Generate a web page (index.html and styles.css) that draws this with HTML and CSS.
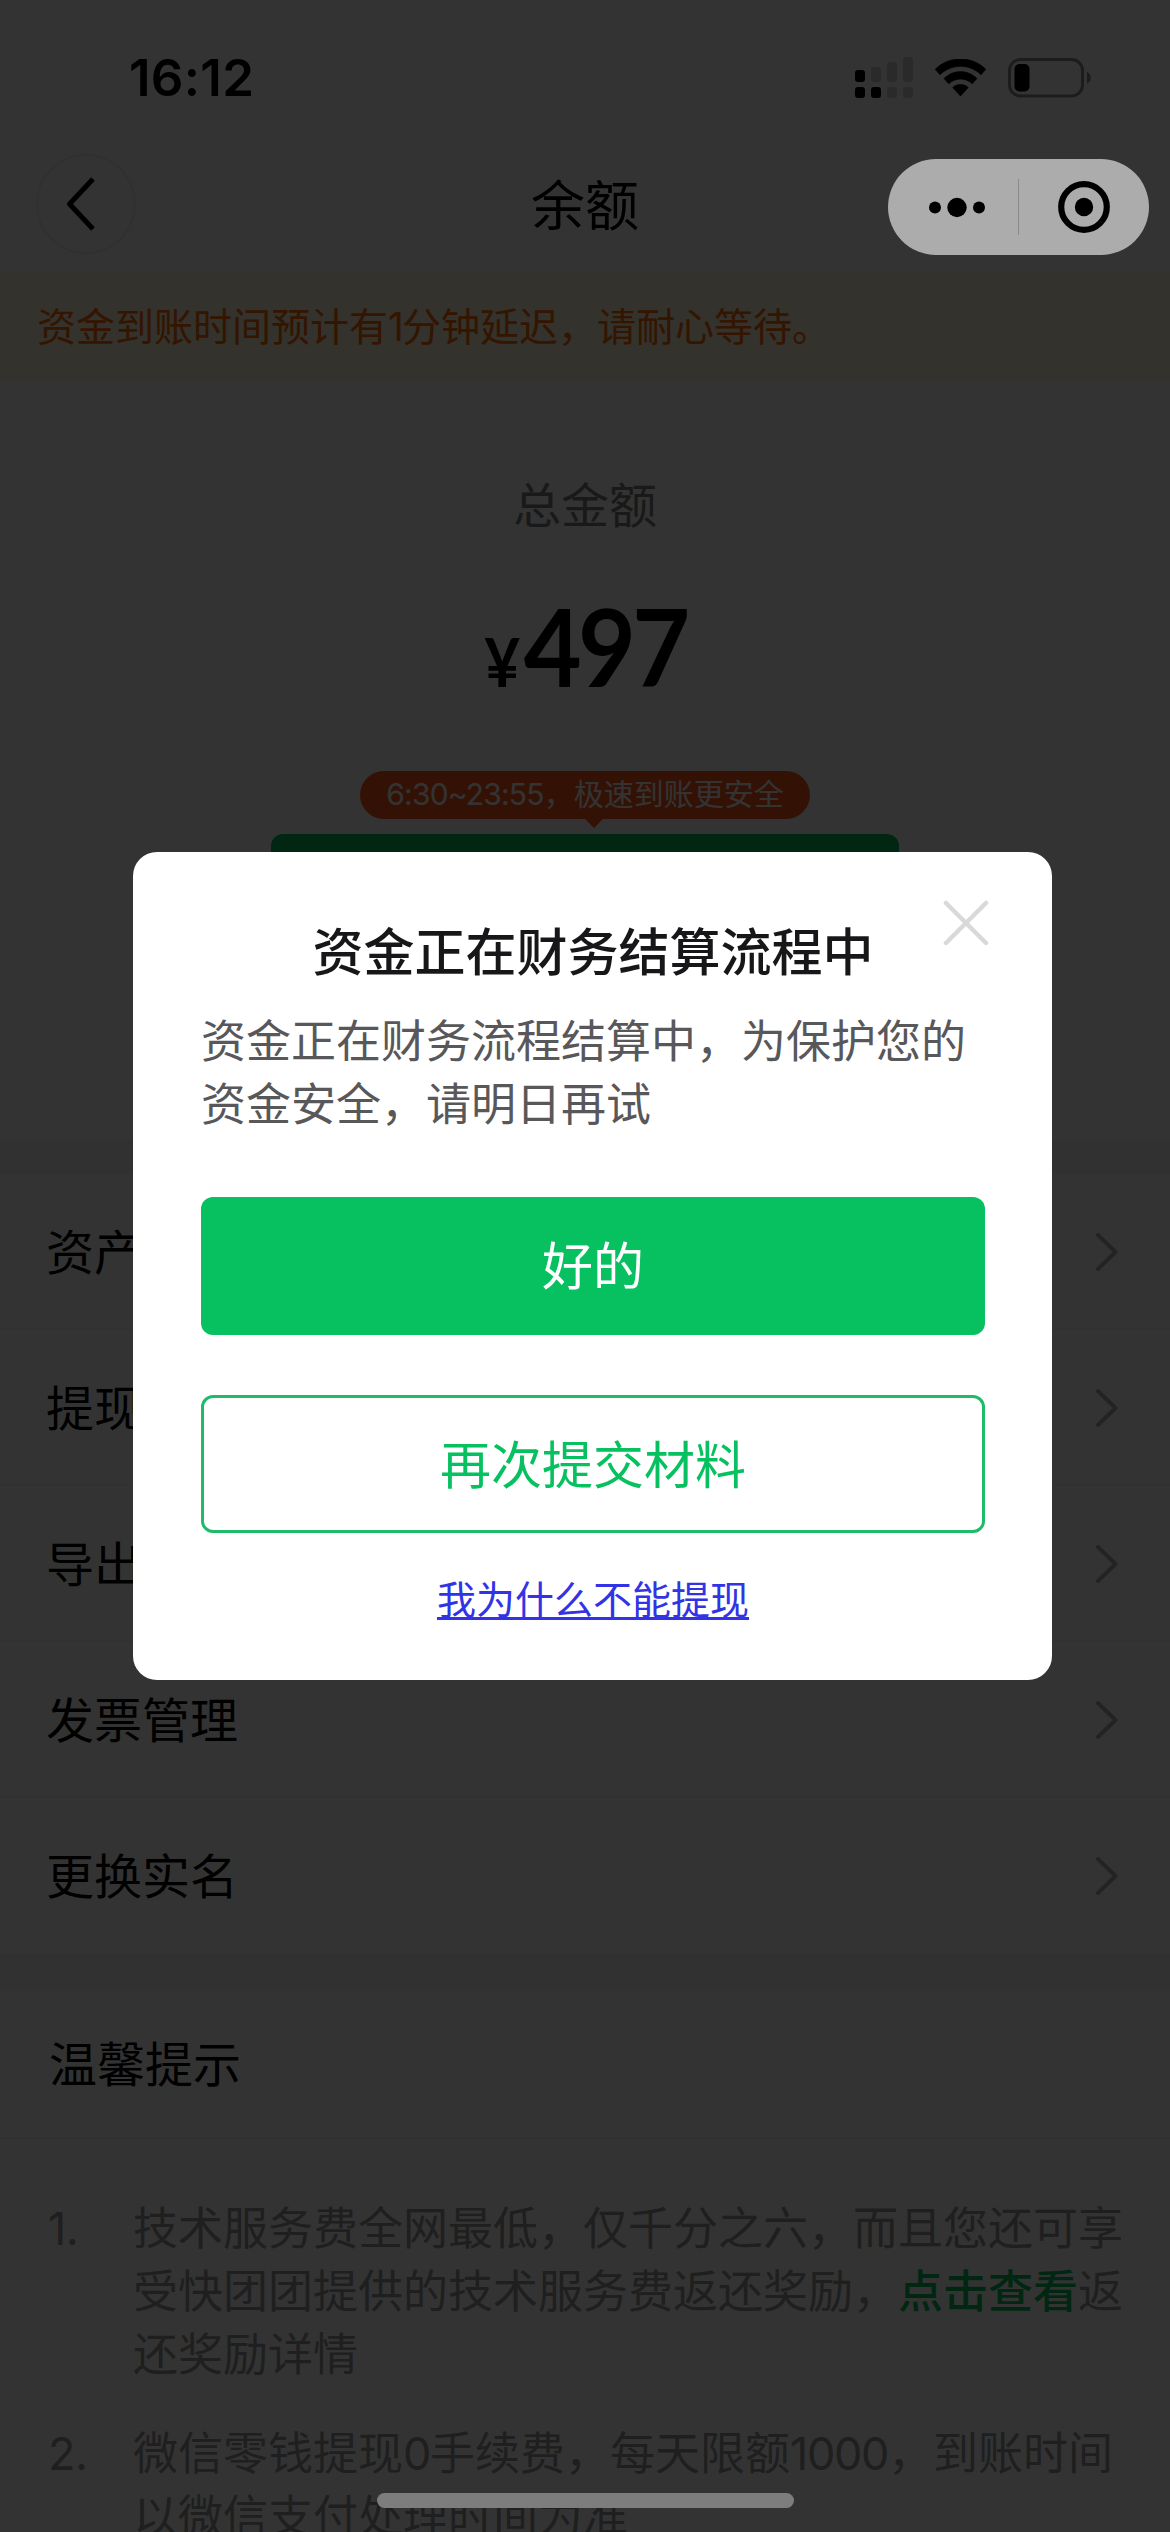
FILE: index.html
```html
<!DOCTYPE html>
<html lang="zh-CN">
<head>
<meta charset="utf-8">
<title>余额</title>
<link rel="stylesheet" href="styles.css">
</head>
<body>
<div class="screen">
  <header class="top">
    <div class="status">
      <span class="time">16:12</span>
      <svg class="signal" width="58" height="42" viewBox="0 0 58 42">
        <g fill="#000"><rect x="0" y="13" width="10" height="12" rx="3"/><rect x="0" y="30" width="10" height="11" rx="3"/><rect x="16" y="30" width="10" height="11" rx="3"/></g>
        <g fill="#d2d2d2"><rect x="16" y="10" width="10" height="15" rx="3"/><rect x="32" y="5" width="10" height="20" rx="3"/><rect x="48" y="0" width="10" height="25" rx="3"/><rect x="32" y="30" width="10" height="11" rx="3"/><rect x="48" y="30" width="10" height="11" rx="3"/></g>
      </svg>
      <svg class="wifi" width="51" height="37" viewBox="0 0 51 37">
        <path d="M25.500 0C35.500 0 44.500 4 50.700 10.300L46 15.700C40.600 10.500 33.500 7.300 25.500 7.300S10.400 10.500 5 15.700L.3 10.300C6.500 4 15.500 0 25.500 0ZM25.500 12.700C32 12.700 37.700 15.300 41.900 19.500L37.200 24.700C34.200 21.700 30 20 25.500 20S16.800 21.700 13.800 24.700L9.100 19.500C13.300 15.300 19 12.700 25.500 12.700ZM25.500 25.500C28.500 25.500 31.200 26.600 33.200 28.500L25.500 37L17.800 28.500C19.800 26.600 22.500 25.500 25.500 25.500Z" stroke="#000" stroke-width="0.800" stroke-linejoin="round"/>
      </svg>
      <svg class="battery" width="84" height="40" viewBox="0 0 84 40">
        <rect x="1.500" y="1.500" width="73" height="36.500" rx="11" fill="none" stroke="#8c8c8c" stroke-width="3"/>
        <rect x="6.500" y="6" width="15" height="27.500" rx="5"/>
        <path d="M79 14C84 16 84 23.500 79 25.500Z" fill="#8c8c8c"/>
      </svg>
    </div>
    <div class="nav">
      <span class="back"><svg width="30" height="54" viewBox="0 0 30 54"><path d="M27 2L3.500 27L27 52" fill="none" stroke="#000" stroke-width="5" stroke-linejoin="round"/></svg></span>
      <h1 class="title">余额</h1>
      <span class="nav-end"></span>
    </div>
  </header>
  <p class="notice">资金到账时间预计有<span class="one">1</span>分钟延迟，请耐心等待。</p>
  <section class="balance">
    <p class="label">总金额</p>
    <p class="amount"><span class="yen">¥</span>497</p>
    <p class="tag"><span class="hours">6:30~23:55</span>，极速到账更安全</p>
    <div class="withdraw"></div>
  </section>
  <ul class="menu">
    <li>资产<svg class="go" width="22" height="38" viewBox="0 0 22 38"><path d="M2 2L19.500 19L2 36"/></svg></li>
    <li>提现<svg class="go" width="22" height="38" viewBox="0 0 22 38"><path d="M2 2L19.500 19L2 36"/></svg></li>
    <li>导出<svg class="go" width="22" height="38" viewBox="0 0 22 38"><path d="M2 2L19.500 19L2 36"/></svg></li>
    <li>发票管理<svg class="go" width="22" height="38" viewBox="0 0 22 38"><path d="M2 2L19.500 19L2 36"/></svg></li>
    <li>更换实名<svg class="go" width="22" height="38" viewBox="0 0 22 38"><path d="M2 2L19.500 19L2 36"/></svg></li>
  </ul>
  <section class="tips">
    <h2 class="tips-title">温馨提示</h2>
    <div class="tip"><span class="num">1.</span><p>技术服务费全网最低，仅千分之六，而且您还可享受快团团提供的技术服务费返还奖励，<a class="more">点击查看</a>返还奖励详情</p></div>
    <div class="tip"><span class="num">2.</span><p>微信零钱提现<span class="digits">0</span>手续费，每天限额<span class="digits">1000</span>，到账时间以微信支付处理时间为准</p></div>
  </section>
</div>

<div class="mask">
  <div class="dialog">
    <h2 class="dialog-title">资金正在财务结算流程中</h2>
    <p class="dialog-text">资金正在财务流程结算中，为保护您的资金安全，请明日再试</p>
    <div class="btn primary">好的</div>
    <div class="btn outline">再次提交材料</div>
    <a class="why">我为什么不能提现</a>
    <svg class="close" width="46" height="46" viewBox="0 0 46 46"><path d="M3 3L43 43M43 3L3 43" stroke="#d9d9d9" stroke-width="4.500" stroke-linecap="round"/></svg>
  </div>
</div>

<div class="capsule">
  <svg width="261" height="96" viewBox="0 0 261 96">
    <circle cx="47" cy="48.500" r="6"/><circle cx="69" cy="48.500" r="9.700"/><circle cx="91" cy="48.500" r="6"/>
    <path d="M130.500 20V76" stroke="#8a8a8a" stroke-width="1"/>
    <circle cx="196" cy="48" r="22.800" fill="none" stroke="#000" stroke-width="6.200"/><circle cx="196" cy="48" r="9.200"/>
  </svg>
</div>
<div class="home-bar"></div>
</body>
</html>
```
FILE: styles.css
```css
* { box-sizing: border-box; margin: 0; padding: 0; }
body {
  width: 1170px;
  height: 2532px;
  overflow: hidden;
  position: relative;
  background: #fff;
  color: #000;
  font-family: "Inter", "Noto Sans CJK SC", sans-serif;
}
h1, h2 { font-weight: 400; }
ul { list-style: none; }
svg { display: block; flex: none; }

.screen { height: 2532px; overflow: hidden; display: flex; flex-direction: column; }
.screen > * { flex: none; }

.top { height: 271px; display: flex; flex-direction: column; }
.status { height: 154px; padding: 57px 78px 0 129px; display: flex; align-items: flex-start; }
.time { font-size: 51px; line-height: 60px; font-weight: 600; margin-top: -9px; letter-spacing: 0.3px; }
.signal { margin-left: auto; }
.wifi { margin: 2px 0 0 22px; }
.battery { margin: 1px 0 0 22px; }
.nav { height: 100px; padding: 0 36px; display: flex; align-items: center; justify-content: space-between; }
.back { width: 100px; height: 100px; border: 2px solid #ededed; border-radius: 50%; display: flex; align-items: center; padding-left: 28px; }
.nav-end { width: 100px; }
.title { margin-top: 6px; font-size: 54px; line-height: 80px; }

.notice { height: 111px; padding-left: 37px; background: #fff8dc; color: #ff6800; font-size: 39px; line-height: 112px; white-space: nowrap; }
.one { letter-spacing: -2px; }

.balance { height: 758px; display: flex; flex-direction: column; align-items: center; }
.label { margin-top: 88px; font-size: 48px; line-height: 72px; color: #7f7f82; }
.amount { margin-top: 43px; height: 120px; font-family: "Lato", sans-serif; font-size: 108px; line-height: 120px; font-weight: 700; letter-spacing: -4px; transform: scaleX(0.925); }
.yen { font-size: 67px; letter-spacing: 0; margin-right: 4px; }
.tag { position: relative; margin-top: 66px; width: 450px; height: 48px; border-radius: 24px; background: #ff5a1a; color: #fff; font-size: 30px; line-height: 46px; text-align: center; white-space: nowrap; }
.hours { letter-spacing: -0.8px; }
.tag::after { content: ""; position: absolute; left: 224px; top: 47px; border: 10px solid transparent; border-top-color: #ff5a1a; border-bottom: 0; }
.withdraw { margin-top: 15px; width: 628px; height: 138px; border-radius: 12px; background: #07c160; }

.menu { border-top: 34px solid #f2f2f2; border-bottom: 37px solid #f2f2f2; }
.menu li { height: 156px; padding: 0 52px 4px 46px; border-bottom: 2px solid #f6f6f6; display: flex; align-items: center; justify-content: space-between; font-size: 48px; }
.menu li:last-child { border-bottom: 0; padding-bottom: 6px; }
.go { margin-top: 6px; fill: none; stroke: #b0b0b0; stroke-width: 4; stroke-linecap: round; stroke-linejoin: round; }

.tips-title { height: 148px; padding-left: 49px; border-bottom: 2px solid #f6f6f6; font-size: 48px; line-height: 148px; }
.tip { display: flex; padding: 0 36px 0 48px; margin-top: 36px; font-size: 45px; line-height: 63px; color: #999; }
.tips-title + .tip { margin-top: 58px; }
.num { width: 85px; letter-spacing: -0.5px; }
.tip p { flex: 1; }
.digits { letter-spacing: -1.4px; }
.more { color: #07c160; font-weight: 500; }

.mask { position: absolute; inset: 0; background: rgba(0, 0, 0, 0.8); padding: 852px 118px 0 133px; }
.dialog { position: relative; height: 828px; padding: 66px 67px 0 68px; border-radius: 24px; background: #fff; display: flex; flex-direction: column; align-items: center; }
.dialog-title { font-size: 51px; line-height: 70px; font-weight: 500; color: #171719; }
.dialog-text { align-self: stretch; margin-top: 22px; font-size: 45px; line-height: 63px; color: #58585a; }
.btn { align-self: stretch; height: 138px; border-radius: 12px; font-size: 51px; text-align: center; }
.primary { margin-top: 61px; background: #07c160; color: #fff; line-height: 139px; }
.outline { margin-top: 60px; border: 3px solid #1fba6a; color: #07c160; line-height: 136px; }
.why { margin-top: 37px; font-size: 39px; line-height: 60px; color: #3333e6; text-decoration: underline; text-decoration-thickness: 3px; text-underline-offset: 3px; text-decoration-skip-ink: none; }
.close { position: absolute; left: 810px; top: 48px; }

.capsule { position: absolute; left: 888px; top: 159px; width: 261px; height: 96px; border-radius: 48px; background: #acacac; }
.home-bar { position: absolute; left: 377px; top: 2493px; width: 417px; height: 15px; border-radius: 8px; background: #7d7d7d; }
```
